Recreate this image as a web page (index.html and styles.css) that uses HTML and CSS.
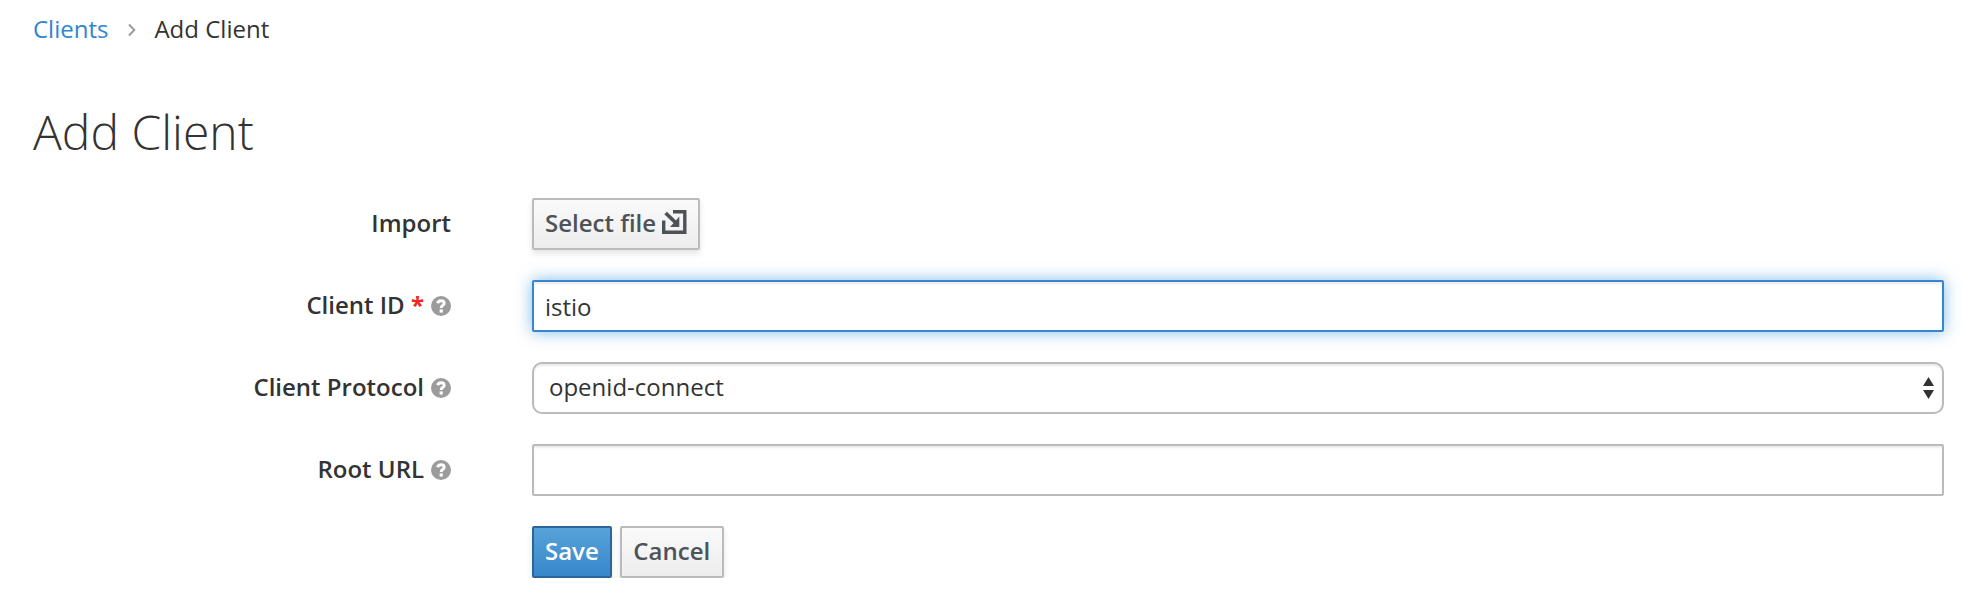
FILE: index.html
```html
<!DOCTYPE html>
<html lang="en">
<head>
<meta charset="utf-8">
<title>Add Client</title>
<link rel="stylesheet" href="styles.css">
</head>
<body>
<svg class="sprite" width="0" height="0">
  <symbol id="help" viewBox="0 0 20 20">
    <circle cx="10" cy="10" r="10" fill="#9c9c9c"/>
    <path d="M6.4 7.2Q7.5 4.7 10.1 4.7Q13.2 4.7 13.2 7.2Q13.2 8.5 11.6 9.5Q10.2 10.3 10.2 12" fill="none" stroke="#fff" stroke-width="2.9"/>
    <rect x="8.6" y="13.4" width="3.2" height="3.2" fill="#fff"/>
  </symbol>
</svg>
<main class="page">
  <nav class="breadcrumb">
    <a class="breadcrumb-link" href="#">Clients</a>
    <svg class="chevron" width="8" height="14" viewBox="0 0 8 14"><path d="M1 1.5L6.3 7L1 12.5" fill="none" stroke="#9c9c9c" stroke-width="2"/></svg>
    <span>Add Client</span>
  </nav>
  <h1 class="title">Add Client</h1>
  <form class="form">
    <div class="row">
      <div class="label">Import</div>
      <button class="btn" type="button">Select file<svg class="import-icon" width="25" height="24" viewBox="0 0 25 24"><path d="M11 1.7H22.8V22.2H1.7V10.5" fill="none" stroke="#4d5258" stroke-width="3.4"/><path d="M3.6 3L14 13" fill="none" stroke="#4d5258" stroke-width="3.8"/><path d="M17.3 6.5V17H8L10.3 14.6L15 9.2Z" fill="#4d5258"/></svg></button>
    </div>
    <div class="row">
      <label class="label" for="client-id">Client ID <span class="required">*</span><svg class="help" width="20" height="20"><use href="#help"/></svg></label>
      <input class="control focused" id="client-id" type="text" value="istio">
    </div>
    <div class="row">
      <div class="label">Client Protocol<svg class="help" width="20" height="20"><use href="#help"/></svg></div>
      <div class="control select"><span>openid-connect</span><svg class="arrows" width="11" height="22" viewBox="0 0 11 22"><path d="M5.5 0L11 9H0ZM0 13H11L5.5 22Z" fill="#333"/></svg></div>
    </div>
    <div class="row">
      <label class="label" for="root-url">Root URL<svg class="help" width="20" height="20"><use href="#help"/></svg></label>
      <input class="control" id="root-url" type="text">
    </div>
    <div class="row">
      <div class="label"></div>
      <div class="actions">
        <button class="btn primary" type="button">Save</button>
        <button class="btn cancel" type="button">Cancel</button>
      </div>
    </div>
  </form>
</main>
</body>
</html>
```
FILE: styles.css
```css
* { box-sizing: border-box; }
body {
  margin: 0;
  background: #fff;
  color: #333;
  font: 24px/40px "Open Sans", sans-serif;
}
.sprite { position: absolute; }
.page { padding: 9px 28px 0 33px; }
.breadcrumb { display: flex; align-items: center; height: 40px; }
.breadcrumb-link { color: #3085d0; text-decoration: none; }
.chevron { margin: 2px 18px 0 20px; }
.title {
  height: 60px;
  margin: 53px 0 36px;
  font-size: 48px;
  font-weight: 300;
  line-height: 60px;
}
.form { display: flex; flex-direction: column; gap: 30px; }
.row { display: flex; height: 52px; }
.label {
  display: flex;
  align-items: center;
  justify-content: flex-end;
  flex: none;
  width: 418px;
  margin-right: 81px;
  padding-bottom: 3px;
  font-weight: 600;
  white-space: pre;
}
.required { color: #f0281e; font-weight: 700; }
.help { margin: 2px 0 0 7px; }
.control {
  flex: 1;
  min-width: 0;
  height: 52px;
  padding: 1px 11px 0;
  border: 2px solid #bbb;
  border-radius: 2px;
  outline: 0;
  background: #fff;
  box-shadow: inset 0 2px 2px rgba(3, 3, 3, .075);
  color: #333;
  font: inherit;
}
.focused {
  border-color: #3787cc;
  box-shadow: inset 0 2px 2px rgba(3, 3, 3, .075), 0 0 16px rgba(0, 120, 215, .5);
}
.select {
  display: flex;
  align-items: center;
  justify-content: space-between;
  padding: 0 8px 3px 15px;
  border-radius: 10px;
}
.arrows { margin-top: 2px; }
.actions { display: flex; gap: 8px; }
.btn {
  display: flex;
  align-items: center;
  justify-content: center;
  height: 52px;
  padding: 0 11px 3px;
  border: 2px solid #bbb;
  border-radius: 2px;
  background: linear-gradient(#fafafa, #ededed);
  box-shadow: 0 4px 6px rgba(3, 3, 3, .1);
  color: #4d5258;
  font: 600 24px/40px "Open Sans", sans-serif;
  white-space: nowrap;
}
.cancel { width: 104px; }
.import-icon { margin: -2px 0 0 6px; }
.primary {
  border-color: #2a6699;
  background: linear-gradient(#58a2d8, #3787cb);
  color: #fff;
}
```
